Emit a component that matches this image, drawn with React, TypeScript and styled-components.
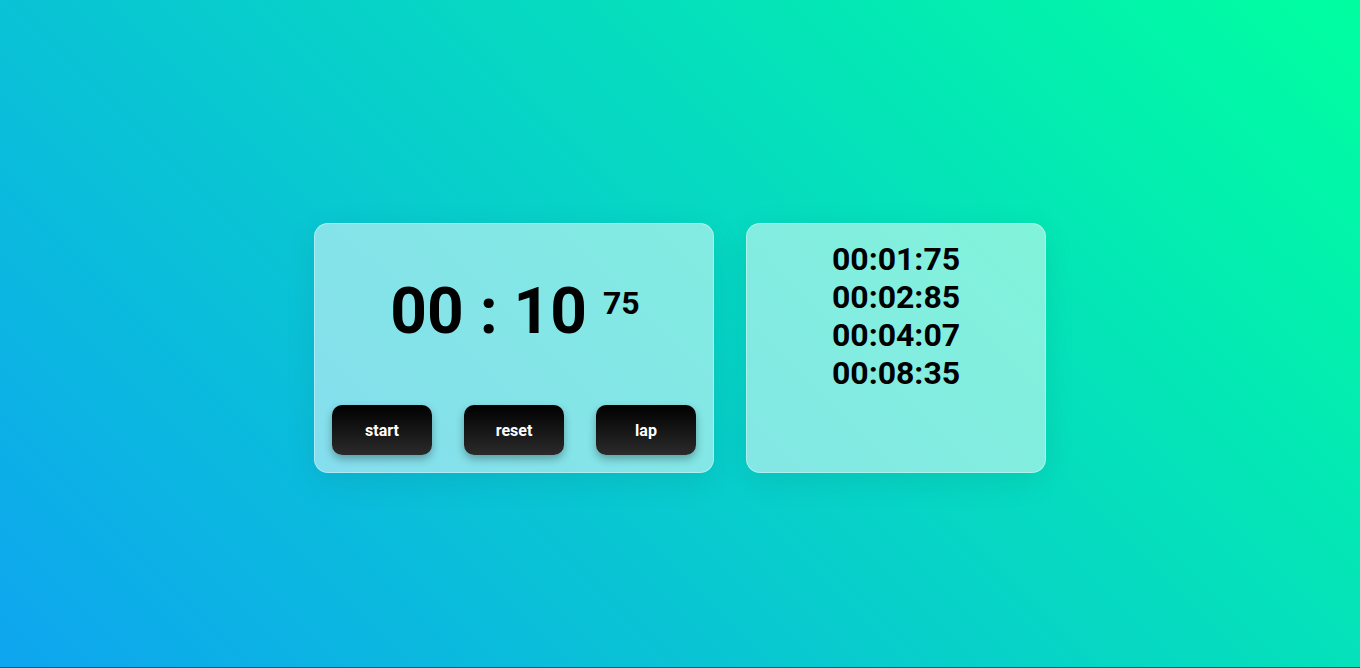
import React from "react";
import styled, { createGlobalStyle } from "styled-components";

const GlobalStyle = createGlobalStyle`
  html { background: #1c5d74; }
  body {
    margin: 0;
    font-family: Roboto, "Liberation Sans", Arial, sans-serif;
  }
`;

const Page = styled.main`
  height: 667px;
  box-sizing: border-box;
  padding-top: 29px;
  background: linear-gradient(45deg, #0ea5f0, #00ffa0);
  display: flex;
  align-items: center;
  justify-content: center;
  gap: 32px;
`;

const Card = styled.section<{ $width: number }>`
  width: ${(p) => p.$width}px;
  height: 250px;
  box-sizing: border-box;
  border-radius: 14px;
  background: rgba(255, 255, 255, 0.5);
  border: 1px solid rgba(255, 255, 255, 0.35);
  box-shadow: 0 8px 32px rgba(0, 0, 0, 0.08);
  display: flex;
  flex-direction: column;
`;

const TimerCard = styled(Card)`
  padding: 0 17px 17px 17px;
  justify-content: space-between;
`;

const Display = styled.div`
  flex: 1;
  display: flex;
  align-items: center;
  justify-content: center;
  gap: 16px;
  color: #000;
  font-weight: 700;
  padding-bottom: 6px;
  padding-left: 2px;
`;

const Main = styled.span`
  font-size: 64px;
  line-height: 1;
  white-space: pre;
`;

const Hundredths = styled.span`
  font-size: 32px;
  line-height: 1;
  align-self: center;
  margin-top: -18px;
`;

const Controls = styled.div`
  display: flex;
  justify-content: space-between;
`;

const Button = styled.button`
  width: 100px;
  height: 50px;
  border: none;
  border-radius: 10px;
  background: linear-gradient(180deg, #000 0%, #2b2b2b 100%);
  color: #fff;
  font-family: Roboto, "Liberation Sans", Arial, sans-serif;
  font-weight: 700;
  font-size: 16px;
  box-shadow: 0 4px 8px rgba(0, 0, 0, 0.3);
  cursor: pointer;
`;

const LapCard = styled(Card)`
  padding-top: 16px;
  align-items: center;
`;

const Lap = styled.div`
  font-size: 32px;
  font-weight: 700;
  color: #000;
  line-height: 38px;
`;

const laps = ["00:01:75", "00:02:85", "00:04:07", "00:08:35"];

export default function App() {
  return (
    <>
      <GlobalStyle />
      <Page>
        <TimerCard $width={400}>
          <Display>
            <Main>00 : 10</Main>
            <Hundredths>75</Hundredths>
          </Display>
          <Controls>
            <Button>start</Button>
            <Button>reset</Button>
            <Button>lap</Button>
          </Controls>
        </TimerCard>
        <LapCard $width={300}>
          {laps.map((l) => (
            <Lap key={l}>{l}</Lap>
          ))}
        </LapCard>
      </Page>
    </>
  );
}
